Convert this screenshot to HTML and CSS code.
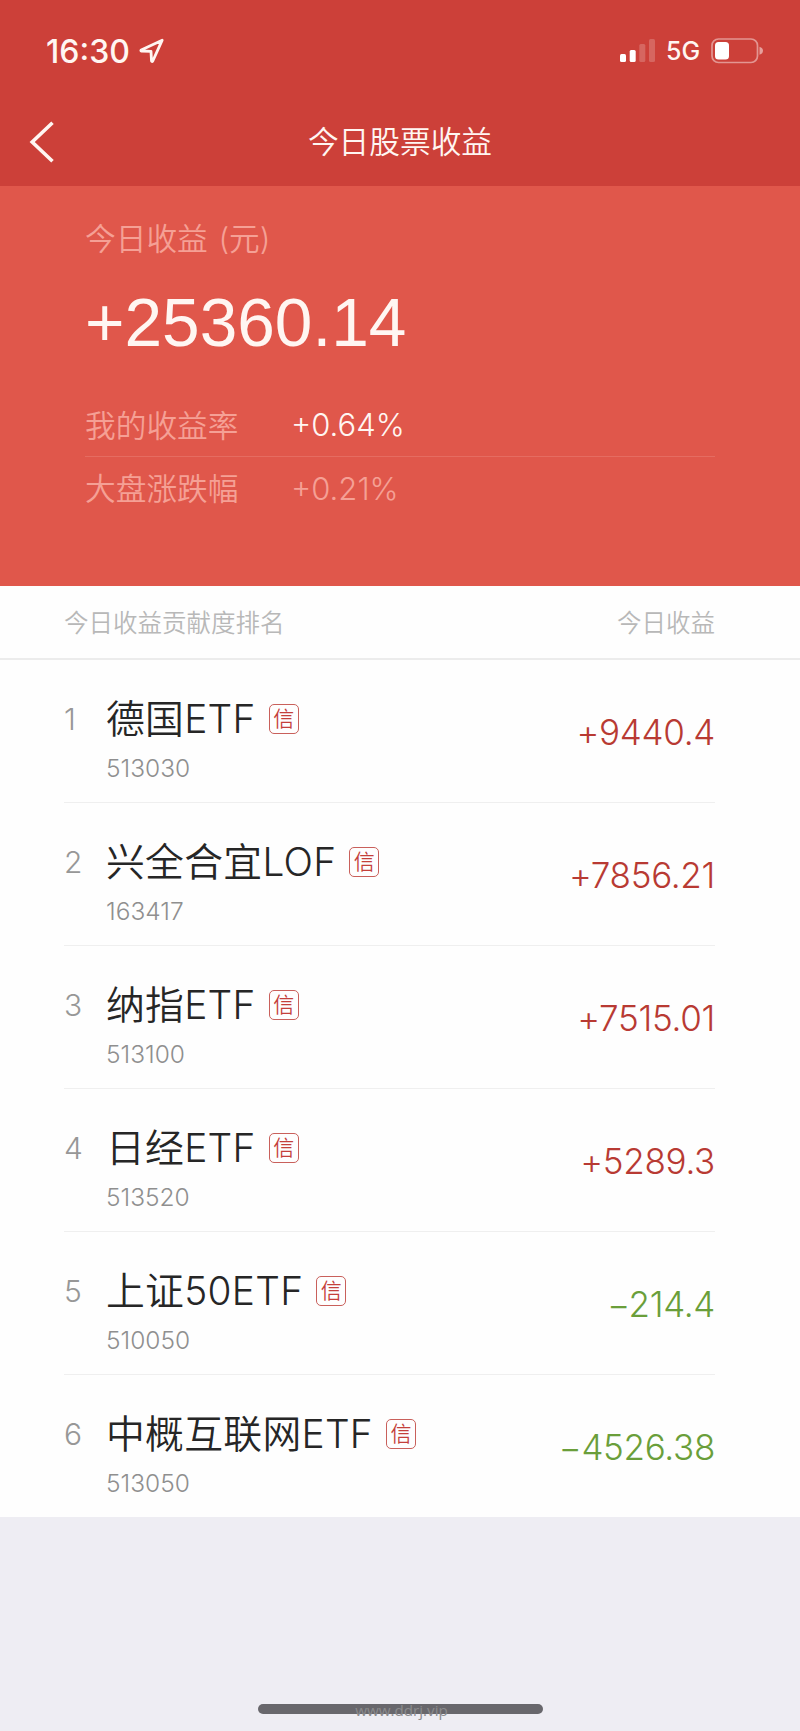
FILE: index.html
```
<!DOCTYPE html>
<html lang="zh-CN">
<head>
    <meta charset="UTF-8">
    <meta name="viewport" content="width=device-width, initial-scale=1.0">
    <title>今日股票收益</title>
    <link rel="stylesheet" href="styles.css">
</head>
<body>

<header class="header">
    <div class="status">
        <div class="status-left">
            <span class="time">16:30</span>
            <svg class="location" width="28" height="28" viewBox="0 0 28 28">
                <path d="M24.2 3.2 L3.2 12.9 Q2.4 13.8 3.5 14 L13 14.4 L13.5 24 Q14 25.2 14.8 24 Z"/>
            </svg>
        </div>
        <div class="status-right">
            <svg class="signal" width="36" height="24" viewBox="0 0 36 24">
                <rect x="0" y="15" width="6" height="8" rx="1.5"/>
                <rect x="9.7" y="11" width="6" height="12" rx="1.5"/>
                <rect class="off" x="19.3" y="5" width="6" height="18" rx="1.5"/>
                <rect class="off" x="29" y="0" width="6" height="23" rx="1.5"/>
            </svg>
            <span class="network">5G</span>
            <svg class="battery" width="53" height="26" viewBox="0 0 53 26">
                <rect class="shell" x="1" y="1" width="45.5" height="23.5" rx="6.5"/>
                <rect class="level" x="4" y="4" width="14" height="17.4" rx="3.5"/>
                <path class="cap" d="M48.5 8.8 Q52 10 52 12.8 Q52 15.6 48.5 16.8 Z"/>
            </svg>
        </div>
    </div>
    <div class="navbar">
        <svg class="back" width="26" height="44" viewBox="0 0 26 44">
            <path d="M23.5 2.8 L3.2 22 L23.5 41.2"/>
        </svg>
        <h1 class="title">今日股票收益</h1>
    </div>
</header>

<section class="summary">
    <div class="summary-label">今日收益 (元)</div>
    <div class="total">+25360.14</div>
    <div class="rate">
        <span class="rate-name">我的收益率</span>
        <span class="rate-value">+0.64%</span>
    </div>
    <div class="rate market">
        <span class="rate-name">大盘涨跌幅</span>
        <span class="rate-value">+0.21%</span>
    </div>
</section>

<div class="list-head">
    <span>今日收益贡献度排名</span>
    <span>今日收益</span>
</div>

<main class="list">
    <div class="row">
        <div class="rank">1</div>
        <div class="stock">
            <div class="name">德国ETF<span class="tag">信</span></div>
            <div class="code">513030</div>
        </div>
        <div class="amount up">+9440.4</div>
    </div>
    <div class="row">
        <div class="rank">2</div>
        <div class="stock">
            <div class="name">兴全合宜LOF<span class="tag">信</span></div>
            <div class="code">163417</div>
        </div>
        <div class="amount up">+7856.21</div>
    </div>
    <div class="row">
        <div class="rank">3</div>
        <div class="stock">
            <div class="name">纳指ETF<span class="tag">信</span></div>
            <div class="code">513100</div>
        </div>
        <div class="amount up">+7515.01</div>
    </div>
    <div class="row">
        <div class="rank">4</div>
        <div class="stock">
            <div class="name">日经ETF<span class="tag">信</span></div>
            <div class="code">513520</div>
        </div>
        <div class="amount up">+5289.3</div>
    </div>
    <div class="row">
        <div class="rank">5</div>
        <div class="stock">
            <div class="name">上证50ETF<span class="tag">信</span></div>
            <div class="code">510050</div>
        </div>
        <div class="amount down">−214.4</div>
    </div>
    <div class="row">
        <div class="rank">6</div>
        <div class="stock">
            <div class="name">中概互联网ETF<span class="tag">信</span></div>
            <div class="code">513050</div>
        </div>
        <div class="amount down">−4526.38</div>
    </div>
</main>

<footer class="footer">
    <div class="home-bar"><span class="site">www.ddrj.vip</span></div>
</footer>

</body>
</html>
```
FILE: styles.css
```
* {
    box-sizing: border-box;
}
body {
    margin: 0;
    width: 800px;
    height: 1731px;
    display: flex;
    flex-direction: column;
    overflow: hidden;
    background-color: #eeedf3;
    font-family: Inter, "Noto Sans CJK SC", sans-serif;
    font-weight: 350;
    white-space: nowrap;
}

/* status bar and title */
.header {
    height: 186px;
    background-color: #cc4039;
    color: #fff6f2;
}
.status {
    display: flex;
    justify-content: space-between;
    align-items: center;
    height: 102px;
    padding: 0 36px 0 46px;
}
.status-left, .status-right {
    display: flex;
    align-items: center;
}
.time {
    width: 92px;
    font-size: 32px;
    font-weight: 550;
}
.location path {
    fill: none;
    stroke: #fff6f2;
    stroke-width: 2.8;
    stroke-linejoin: round;
}
.signal {
    fill: #fff;
}
.signal .off {
    opacity: 0.2;
}
.network {
    width: 55px;
    padding-left: 10px;
    font-size: 25px;
    font-weight: 500;
    line-height: 30px;
}
.battery .shell {
    fill: none;
    stroke: #fff;
    stroke-width: 1.7;
    opacity: 0.45;
}
.battery .level {
    fill: #fff;
}
.battery .cap {
    fill: #fff;
    opacity: 0.5;
}
.navbar {
    display: grid;
    grid-template-columns: 100px 1fr 100px;
    align-items: center;
    height: 80px;
}
.back {
    margin-left: 29px;
}
.back path {
    fill: none;
    stroke: #fff6f2;
    stroke-width: 3.6;
}
.title {
    margin: 0;
    font-size: 30.7px;
    font-weight: 350;
    line-height: 42px;
    text-align: center;
}

/* today's profit */
.summary {
    height: 400px;
    padding: 33px 85px 0;
    background-color: #e0574b;
    color: #f5a095;
    font-size: 30.7px;
}
.summary-label {
    line-height: 40px;
    word-spacing: 2px;
}
.total {
    margin-top: 24px;
    font-family: "Liberation Sans", Arial, sans-serif;
    font-size: 67.6px;
    font-weight: 400;
    line-height: 80px;
    color: #fff6f2;
}
.rate {
    display: flex;
    align-items: center;
    height: 64px;
    margin-top: 30px;
    border-bottom: 1px solid #e56c61;
}
.rate-name {
    width: 206px;
    padding-bottom: 3px;
}
.rate-value {
    font-size: 31px;
    color: #fff6f2;
}
.market {
    height: 62px;
    margin-top: 0;
    border-bottom: none;
}
.market .rate-value {
    color: #f5a095;
}

/* ranking list */
.list-head {
    display: flex;
    justify-content: space-between;
    align-items: center;
    height: 74px;
    padding: 0 85px 2px 64px;
    border-bottom: 2px solid #ececec;
    background-color: #fefefe;
    font-size: 24.5px;
    color: #b8b8b8;
}
.list {
    padding: 0 85px 0 64px;
    background-color: #fefefe;
}
.row {
    display: grid;
    grid-template-columns: 42px 1fr auto;
    height: 143px;
    padding-top: 34px;
    border-bottom: 1px solid #efefef;
}
.row:last-child {
    height: 142px;
    border-bottom: none;
}
.rank {
    font-size: 30px;
    line-height: 50px;
    color: #979797;
}
.name {
    display: flex;
    align-items: center;
    height: 50px;
    font-size: 38.8px;
    letter-spacing: 0.3px;
    line-height: 52px;
    color: #262626;
}
.tag {
    width: 30px;
    height: 30px;
    margin-left: 13px;
    border: 1.5px solid #c9605b;
    border-radius: 5px;
    font-size: 21px;
    letter-spacing: 0;
    line-height: 28px;
    text-align: center;
    color: #c4403b;
}
.code {
    font-size: 24.5px;
    font-weight: 300;
    line-height: 48px;
    color: #8f8f8f;
}
.amount {
    padding-top: 13px;
    font-size: 35px;
    letter-spacing: -0.3px;
    line-height: 50px;
}
.up {
    color: #b83a33;
}
.down {
    color: #6a9e3a;
}

.footer {
    display: flex;
    flex: 1;
    justify-content: center;
    align-items: flex-end;
    padding-bottom: 17px;
}
.home-bar {
    width: 285px;
    height: 10px;
    border-radius: 5px;
    background-color: #68676c;
    text-align: center;
}
.site {
    display: block;
    padding-left: 3px;
    font-family: "Open Sans", "Noto Sans", sans-serif;
    font-size: 15.2px;
    font-weight: 400;
    line-height: 13px;
    color: #8b8b8d;
}
```
